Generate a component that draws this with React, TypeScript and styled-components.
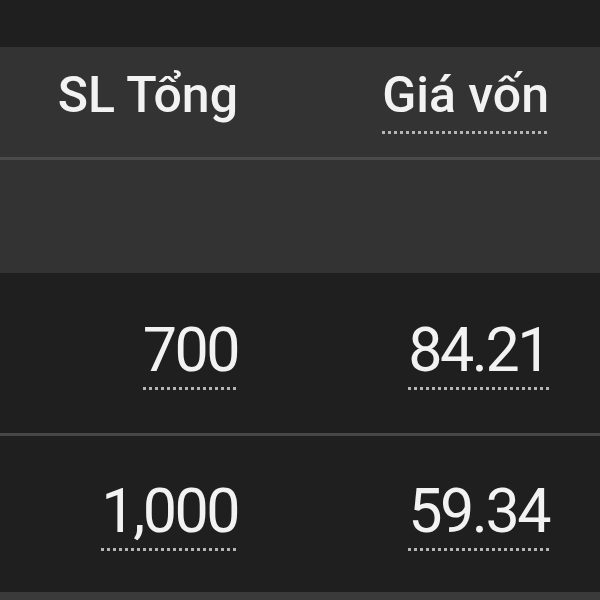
import React from "react";
import styled, { createGlobalStyle } from "styled-components";

const Global = createGlobalStyle`
  html, body { margin: 0; padding: 0; background: #1e1e1e; }
  body { font-family: Roboto, "Noto Sans", "Liberation Sans", sans-serif; }
`;

const Page = styled.div`
  width: 600px;
  height: 600px;
  overflow: hidden;
  background: #1e1e1e;
  display: flex;
  flex-direction: column;
`;

const TopBand = styled.div`
  height: 47px;
  background: #1f1f1f;
`;

const Row = styled.div<{ $h: number; $bg: string; $line?: string }>`
  height: ${(p) => p.$h}px;
  background: ${(p) => p.$bg};
  border-bottom: ${(p) => (p.$line ? `3px solid ${p.$line}` : "none")};
  display: grid;
  grid-template-columns: 238px 311px 1fr;
  align-items: center;
  flex-shrink: 0;
`;

const Cell = styled.div`
  display: flex;
  justify-content: flex-end;
  align-items: center;
`;

const Label = styled.span<{
  $size: number;
  $weight: number;
  $dotted?: boolean;
  $gap: number;
  $track?: number;
  $shift?: number;
}>`
  display: inline-block;
  font-size: ${(p) => p.$size}px;
  font-weight: ${(p) => p.$weight};
  letter-spacing: ${(p) => p.$track ?? 0}px;
  line-height: 1;
  color: #f2f2f2;
  margin-top: ${(p) => p.$shift ?? 0}px;
  padding-bottom: ${(p) => p.$gap}px;
  background-image: ${(p) =>
    p.$dotted ? "linear-gradient(to right, #b5b5b5 50%, transparent 50%)" : "none"};
  background-size: 6px 3px;
  background-repeat: repeat-x;
  background-position: left bottom;
`;

const Num = styled(Label).attrs({ $size: 61, $weight: 400, $gap: 9, $track: -2.5, $shift: 4, $dotted: true })``;

const BottomBand = styled.div`
  flex: 1;
  background: #3a3a3a;
`;

const rows = [
  { qty: "700", cost: "84.21", h: 160, line: "#474747" },
  { qty: "1,000", cost: "59.34", h: 156 },
];

export default function App() {
  return (
    <Page>
      <Global />
      <TopBand />
      <Row $h={110} $bg="#333333" $line="#4b4b4b">
        <Cell>
          <Label $size={50} $weight={500} $gap={14}>SL Tổng</Label>
        </Cell>
        <Cell>
          <Label $size={50} $weight={500} $gap={14} $dotted>Giá vốn</Label>
        </Cell>
        <Cell />
      </Row>
      <Row $h={113} $bg="#333333" />
      {rows.map((r) => (
        <Row key={r.qty} $h={r.h} $bg="#1f1f1f" $line={r.line}>
          <Cell>
            <Num>{r.qty}</Num>
          </Cell>
          <Cell>
            <Num>{r.cost}</Num>
          </Cell>
          <Cell />
        </Row>
      ))}
      <BottomBand />
    </Page>
  );
}
